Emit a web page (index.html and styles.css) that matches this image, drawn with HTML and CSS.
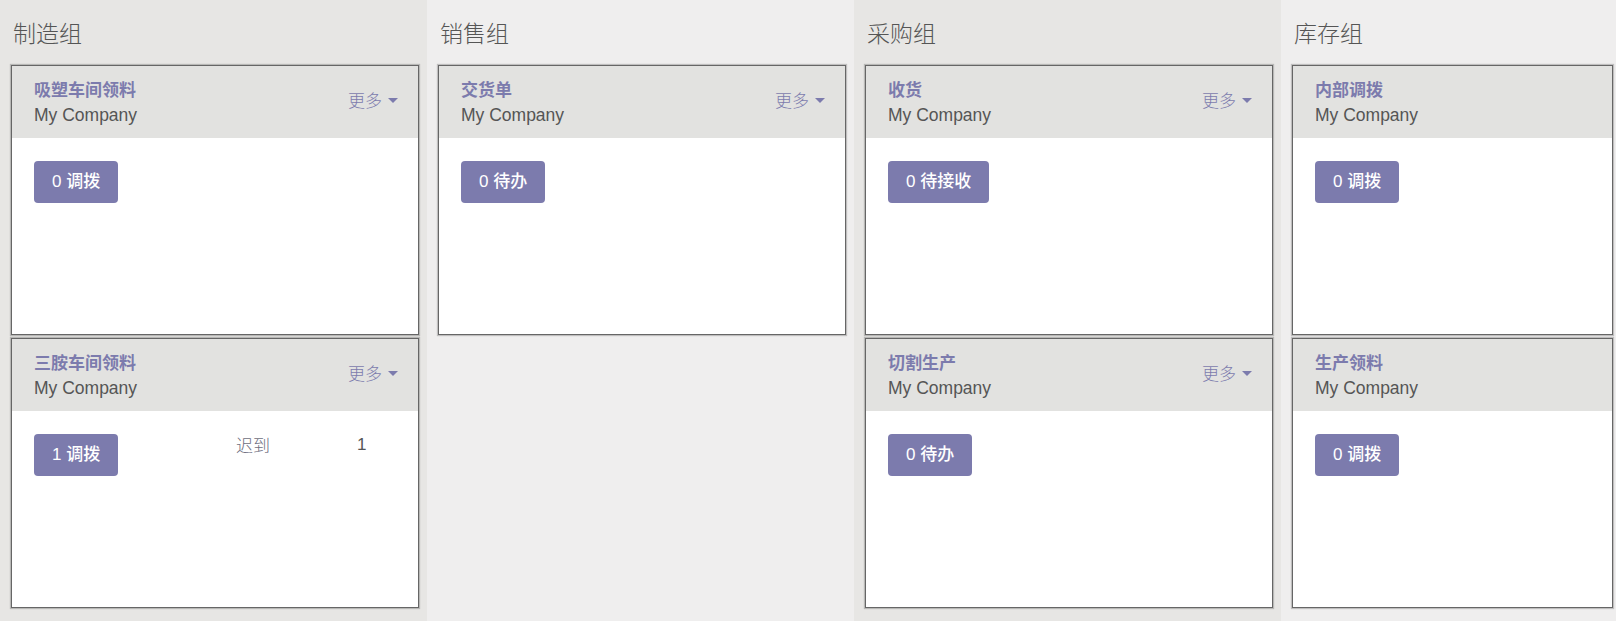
FILE: index.html
```html
<!DOCTYPE html>
<html lang="zh">
<head>
<meta charset="utf-8">
<title>Kanban</title>
<link rel="stylesheet" href="styles.css">
</head>
<body>
<div class="kanban">
  <section class="column col-dark">
    <h2 class="col-title">制造组</h2>
    <div class="card">
      <div class="card-head">
        <div class="head-text">
          <div class="card-name">吸塑车间领料</div>
          <div class="card-company">My Company</div>
        </div>
        <div class="more">更多<span class="caret"></span></div>
      </div>
      <div class="card-body">
        <div class="cell-btn"><span class="btn">0 调拨</span></div>
      </div>
    </div>
    <div class="card">
      <div class="card-head">
        <div class="head-text">
          <div class="card-name">三胺车间领料</div>
          <div class="card-company">My Company</div>
        </div>
        <div class="more">更多<span class="caret"></span></div>
      </div>
      <div class="card-body">
        <div class="cell-btn"><span class="btn">1 调拨</span></div>
        <div class="cell-label">迟到</div>
        <div class="cell-count">1</div>
      </div>
    </div>
  </section>

  <section class="column col-light">
    <h2 class="col-title">销售组</h2>
    <div class="card">
      <div class="card-head">
        <div class="head-text">
          <div class="card-name">交货单</div>
          <div class="card-company">My Company</div>
        </div>
        <div class="more">更多<span class="caret"></span></div>
      </div>
      <div class="card-body">
        <div class="cell-btn"><span class="btn">0 待办</span></div>
      </div>
    </div>
  </section>

  <section class="column col-dark">
    <h2 class="col-title">采购组</h2>
    <div class="card">
      <div class="card-head">
        <div class="head-text">
          <div class="card-name">收货</div>
          <div class="card-company">My Company</div>
        </div>
        <div class="more">更多<span class="caret"></span></div>
      </div>
      <div class="card-body">
        <div class="cell-btn"><span class="btn">0 待接收</span></div>
      </div>
    </div>
    <div class="card">
      <div class="card-head">
        <div class="head-text">
          <div class="card-name">切割生产</div>
          <div class="card-company">My Company</div>
        </div>
        <div class="more">更多<span class="caret"></span></div>
      </div>
      <div class="card-body">
        <div class="cell-btn"><span class="btn">0 待办</span></div>
      </div>
    </div>
  </section>

  <section class="column col-light col-last">
    <h2 class="col-title">库存组</h2>
    <div class="card">
      <div class="card-head">
        <div class="head-text">
          <div class="card-name">内部调拨</div>
          <div class="card-company">My Company</div>
        </div>
      </div>
      <div class="card-body">
        <div class="cell-btn"><span class="btn">0 调拨</span></div>
      </div>
    </div>
    <div class="card">
      <div class="card-head">
        <div class="head-text">
          <div class="card-name">生产领料</div>
          <div class="card-company">My Company</div>
        </div>
      </div>
      <div class="card-body">
        <div class="cell-btn"><span class="btn">0 调拨</span></div>
      </div>
    </div>
  </section>
</div>
</body>
</html>
```

FILE: styles.css
```css
* { box-sizing: border-box; }

html, body {
  margin: 0;
  padding: 0;
  height: 621px;
  overflow: hidden;
  background: #efeeee;
  font-family: "Liberation Sans", "Noto Sans CJK SC", sans-serif;
  font-size: 17px;
  color: #555;
}

.kanban {
  display: flex;
  height: 621px;
}

.column {
  flex: 0 0 427px;
  width: 427px;
  padding: 0 8px 0 11px;
  display: flex;
  flex-direction: column;
  gap: 3px;
}

.col-dark { background: #e7e6e4; }
.col-light { background: #efeeee; }

.col-last {
  flex: 0 0 335px;
  width: 335px;
  padding-right: 3px;
}

.col-title {
  margin: 0 0 -3px 0;
  height: 65px;
  padding: 16px 0 0 2px;
  font-size: 23px;
  line-height: 32px;
  font-weight: 300;
  color: #555;
  font-family: "Noto Sans CJK SC", "Liberation Sans", sans-serif;
}

.card {
  height: 270px;
  background: #fff;
  border: 1px solid #666;
  box-shadow: 0 0 1px 1px rgba(0, 0, 0, 0.2);
  display: flex;
  flex-direction: column;
}

.card-head {
  background: #e2e2e0;
  height: 72px;
  padding: 11px 20px 0 22px;
  display: flex;
  align-items: flex-start;
  justify-content: space-between;
}

.card-name {
  color: #7c7bad;
  font-weight: 700;
  line-height: 24px;
  font-family: "Noto Sans CJK SC", "Liberation Sans", sans-serif;
  font-size: 17px;
}

.card-company {
  margin-top: 2px;
  line-height: 24px;
  font-size: 17.5px;
  color: #555;
}

.more {
  margin-top: 12px;
  font-size: 17px;
  line-height: 22px;
  color: #7c7bad;
  font-weight: 300;
  font-family: "Noto Sans CJK SC", "Liberation Sans", sans-serif;
  display: flex;
  align-items: center;
}

.caret {
  display: inline-block;
  width: 0;
  height: 0;
  margin-left: 6px;
  border-left: 5px solid transparent;
  border-right: 5px solid transparent;
  border-top: 5px solid #7c7bad;
}

.card-body {
  padding: 23px 21px 0 22px;
  display: grid;
  grid-template-columns: 202px 121px auto;
  align-items: start;
}

.btn {
  display: inline-block;
  height: 42px;
  padding: 0 18px;
  line-height: 42px;
  background: #7c7bad;
  color: #fff;
  border-radius: 4px;
  font-size: 17px;
  font-weight: 500;
  font-family: "Liberation Sans", "Noto Sans CJK SC", sans-serif;
  white-space: nowrap;
}

.cell-label {
  line-height: 22px;
  color: #6e6e80;
  font-family: "Noto Sans CJK SC", "Liberation Sans", sans-serif;
  font-weight: 300;
}

.cell-count {
  line-height: 22px;
  color: #555;
}
```
